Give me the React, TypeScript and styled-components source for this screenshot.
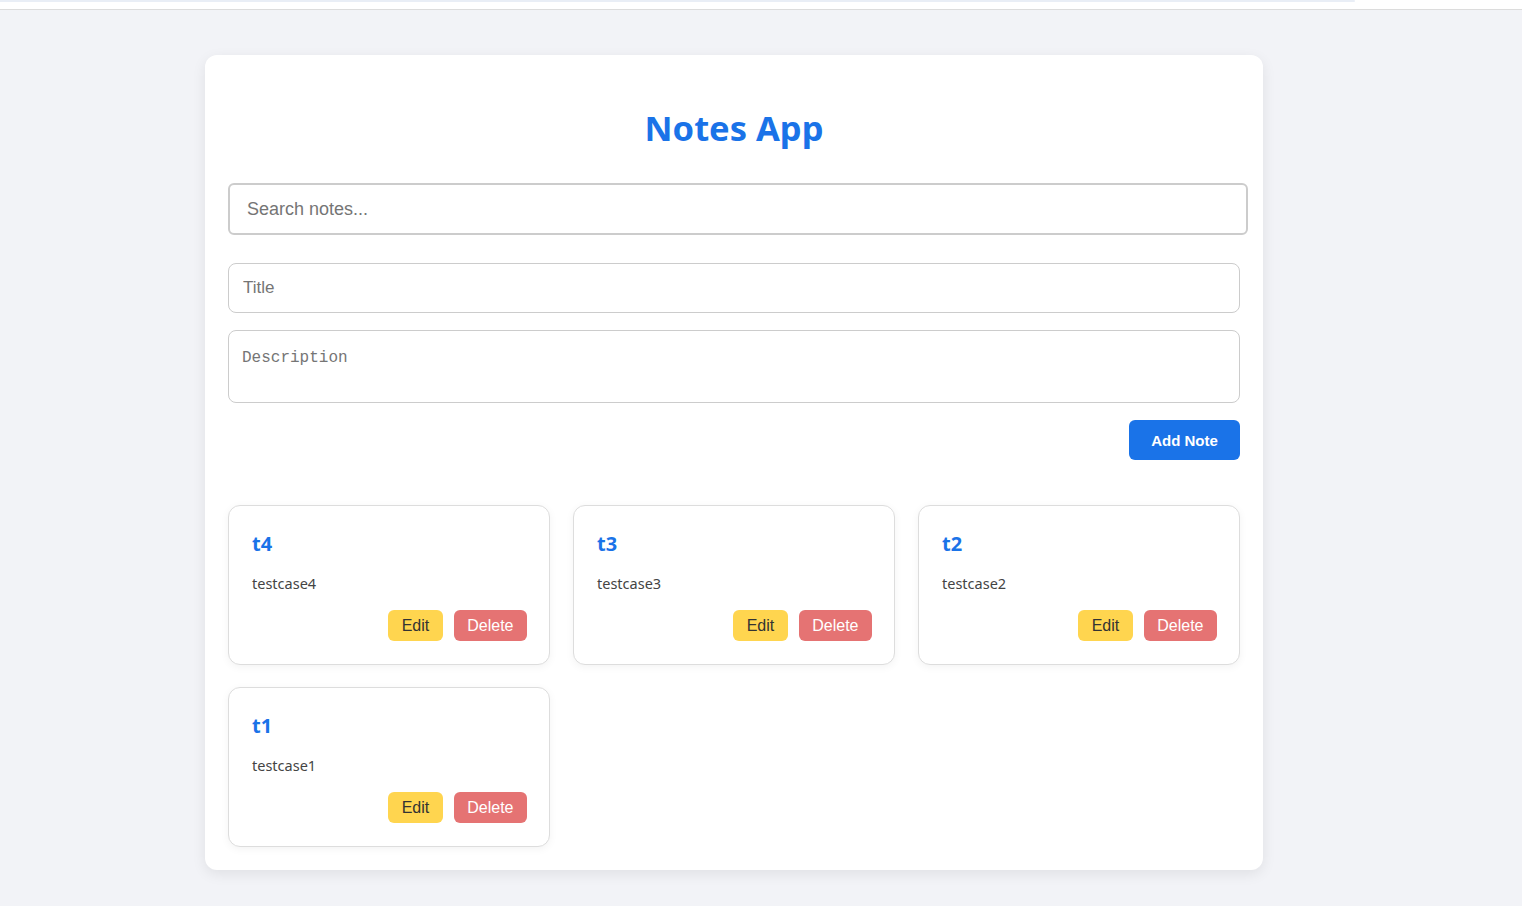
import React from "react";
import styled, { createGlobalStyle } from "styled-components";

const Global = createGlobalStyle`
  html, body { margin: 0; padding: 0; }
  body {
    background: #f2f3f7;
    font-family: "Noto Sans", "Open Sans", sans-serif;
    color: #333;
  }
  * { box-sizing: border-box; }
`;

const TopStrip = styled.div`
  height: 10px;
  background: #ffffff;
  border-bottom: 1px solid #dcdcdc;
`;

const TopLine = styled.div`
  width: 1355px;
  height: 2px;
  background: #e9eef6;
  border-radius: 0 2px 2px 0;
`;

const Panel = styled.main`
  width: 1058px;
  margin: 45px 0 36px 205px;
  background: #ffffff;
  border-radius: 12px;
  box-shadow: 0 4px 14px rgba(0, 0, 0, 0.08);
  padding: 24px 23px 23px 23px;
`;

const Heading = styled.h1`
  margin: 25px 0 31px;
  text-align: center;
  color: #1a73e8;
  font-family: "Noto Sans", sans-serif;
  font-weight: 700;
  font-size: 34.5px;
  line-height: 48px;
`;

const SearchInput = styled.input`
  display: block;
  width: calc(100% + 8px);
  height: 52px;
  padding: 0 17px;
  border: 2px solid #cccccc;
  border-radius: 6px;
  font-family: "Liberation Sans", Arial, sans-serif;
  font-size: 18px;
  color: #333;
  outline: none;
  &::placeholder { color: #757575; }
`;

const Form = styled.form`
  display: flex;
  flex-direction: column;
  gap: 17px;
  margin-top: 28px;
`;

const TitleInput = styled.input`
  display: block;
  width: 100%;
  height: 50px;
  padding: 0 14px;
  border: 1px solid #cccccc;
  border-radius: 8px;
  font-family: "Liberation Sans", Arial, sans-serif;
  font-size: 17px;
  outline: none;
  &::placeholder { color: #757575; }
`;

const DescArea = styled.textarea`
  display: block;
  width: 100%;
  height: 73px;
  padding: 17px 13px 13px;
  border: 1px solid #cccccc;
  border-radius: 8px;
  font-family: "Liberation Mono", "DejaVu Sans Mono", monospace;
  font-size: 16px;
  line-height: 20px;
  resize: none;
  outline: none;
  &::placeholder { color: #757575; }
`;

const FormActions = styled.div`
  display: flex;
  justify-content: flex-end;
`;

const AddButton = styled.button`
  width: 111px;
  height: 40px;
  border: none;
  border-radius: 6px;
  background: #1a73e8;
  color: #ffffff;
  font-family: "Liberation Sans", Arial, sans-serif;
  font-weight: 700;
  font-size: 15px;
  cursor: pointer;
`;

const Grid = styled.section`
  display: grid;
  grid-template-columns: repeat(3, 322px);
  column-gap: 23px;
  row-gap: 22px;
  margin-top: 45px;
`;

const NoteCard = styled.article`
  height: 160px;
  background: #ffffff;
  border: 1px solid #dddddd;
  border-radius: 12px;
  box-shadow: 0 2px 8px rgba(0, 0, 0, 0.05);
  padding: 24px 22px 23px 23px;
  display: flex;
  flex-direction: column;
`;

const NoteTitle = styled.h3`
  margin: 0 0 17px;
  color: #1a73e8;
  font-family: "Noto Sans", sans-serif;
  font-weight: 700;
  font-size: 20px;
  line-height: 27px;
`;

const NoteText = styled.p`
  margin: 0 0 17px;
  font-size: 14.5px;
  line-height: 19px;
  color: #444444;
`;

const NoteActions = styled.div`
  display: flex;
  justify-content: flex-end;
  gap: 11px;
`;

const ActionButton = styled.button<{ $variant: "edit" | "delete" }>`
  height: 31px;
  padding: 0 13.5px;
  border: none;
  border-radius: 6px;
  font-family: "Liberation Sans", Arial, sans-serif;
  font-size: 16px;
  cursor: pointer;
  background: ${(p) => (p.$variant === "edit" ? "#ffd54f" : "#e57373")};
  color: ${(p) => (p.$variant === "edit" ? "#333333" : "#ffffff")};
`;

const notes = [
  { id: 4, title: "t4", body: "testcase4" },
  { id: 3, title: "t3", body: "testcase3" },
  { id: 2, title: "t2", body: "testcase2" },
  { id: 1, title: "t1", body: "testcase1" },
];

export default function App() {
  return (
    <>
      <Global />
      <TopStrip>
        <TopLine />
      </TopStrip>
      <Panel>
        <Heading>Notes App</Heading>
        <SearchInput placeholder="Search notes..." />
        <Form onSubmit={(e) => e.preventDefault()}>
          <TitleInput placeholder="Title" />
          <DescArea placeholder="Description" />
          <FormActions>
            <AddButton type="submit">Add Note</AddButton>
          </FormActions>
        </Form>
        <Grid>
          {notes.map((n) => (
            <NoteCard key={n.id}>
              <NoteTitle>{n.title}</NoteTitle>
              <NoteText>{n.body}</NoteText>
              <NoteActions>
                <ActionButton $variant="edit">Edit</ActionButton>
                <ActionButton $variant="delete">Delete</ActionButton>
              </NoteActions>
            </NoteCard>
          ))}
        </Grid>
      </Panel>
    </>
  );
}
